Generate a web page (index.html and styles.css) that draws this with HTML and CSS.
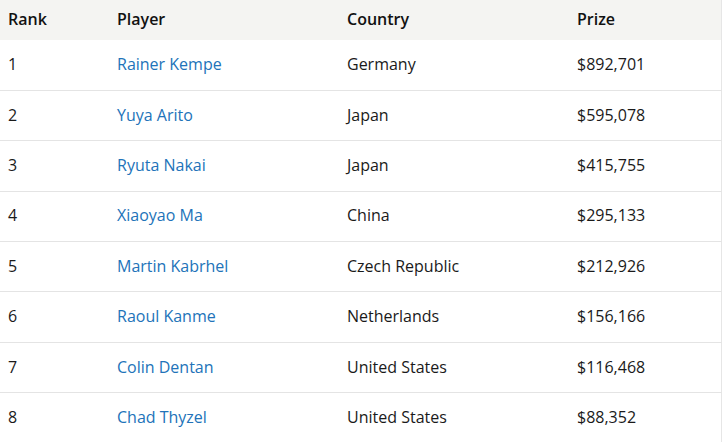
FILE: index.html
```html
<!DOCTYPE html>
<html>
<head>
<meta charset="utf-8">
<link rel="stylesheet" href="styles.css">
</head>
<body>
<table class="results">
  <thead>
    <tr><th class="c-rank">Rank</th><th class="c-player">Player</th><th class="c-country">Country</th><th class="c-prize">Prize</th></tr>
  </thead>
  <tbody>
    <tr><td>1</td><td><a href="#">Rainer Kempe</a></td><td>Germany</td><td>$892,701</td></tr>
    <tr><td>2</td><td><a href="#">Yuya Arito</a></td><td>Japan</td><td>$595,078</td></tr>
    <tr><td>3</td><td><a href="#">Ryuta Nakai</a></td><td>Japan</td><td>$415,755</td></tr>
    <tr><td>4</td><td><a href="#">Xiaoyao Ma</a></td><td>China</td><td>$295,133</td></tr>
    <tr><td>5</td><td><a href="#">Martin Kabrhel</a></td><td>Czech Republic</td><td>$212,926</td></tr>
    <tr><td>6</td><td><a href="#">Raoul Kanme</a></td><td>Netherlands</td><td>$156,166</td></tr>
    <tr><td>7</td><td><a href="#">Colin Dentan</a></td><td>United States</td><td>$116,468</td></tr>
    <tr><td>8</td><td><a href="#">Chad Thyzel</a></td><td>United States</td><td>$88,352</td></tr>
  </tbody>
</table>
</body>
</html>
```
FILE: styles.css
```css
html, body {
  margin: 0;
  padding: 0;
  background: #ffffff;
}
body {
  font-family: "Open Sans", "Liberation Sans", sans-serif;
  font-size: 16px;
  line-height: 22px;
  color: #1a1a1a;
}
.results {
  width: 722px;
  border-collapse: collapse;
  border-right: 1px solid #e6e6e6;
}
.results th {
  background: #f4f4f2;
  font-weight: 600;
  text-align: left;
  height: 40px;
  padding: 0 8px 2px;
  box-sizing: border-box;
  color: #111;
}
.results td {
  height: 50.4px;
  padding: 0 8px 2px;
  box-sizing: border-box;
  border-bottom: 1px solid #e4e4e4;
}
.results tbody tr:last-child td {
  border-bottom: none;
}
.c-rank { width: 109px; }
.c-player { width: 230px; }
.c-country { width: 230px; }
.results a {
  color: #2273b9;
  text-decoration: none;
}
```
